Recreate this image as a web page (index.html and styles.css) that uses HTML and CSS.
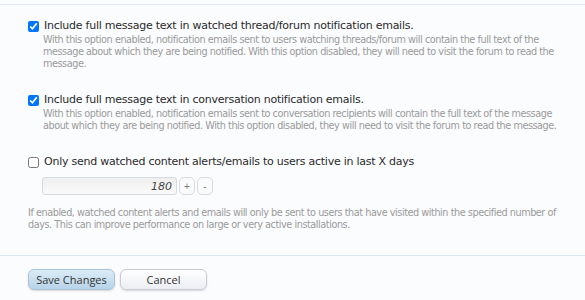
FILE: index.html
```html
<!DOCTYPE html>
<html lang="en">
<head>
  <meta charset="UTF-8">
  <title>options</title>
  <link rel="stylesheet" href="styles.css">
</head>
<body>
  <div class="top-rule"></div>

  <form class="options">
    <div class="option">
      <label class="check">
        <input type="checkbox" checked>
        <span>Include full message text in watched thread/forum notification emails.</span>
      </label>
      <p class="explain">With this option enabled, notification emails sent to users watching threads/forum will contain the full text of the message about which they are being notified. With this option disabled, they will need to visit the forum to read the message.</p>
    </div>

    <div class="option">
      <label class="check">
        <input type="checkbox" checked>
        <span>Include full message text in conversation notification emails.</span>
      </label>
      <p class="explain">With this option enabled, notification emails sent to conversation recipients will contain the full text of the message about which they are being notified. With this option disabled, they will need to visit the forum to read the message.</p>
    </div>

    <div class="option">
      <label class="check">
        <input type="checkbox">
        <span>Only send watched content alerts/emails to users active in last X days</span>
      </label>
      <div class="spin">
        <input type="text" class="spin-box" value="180">
        <button type="button" class="spin-btn">+</button>
        <button type="button" class="spin-btn">-</button>
      </div>
      <p class="explain wide">If enabled, watched content alerts and emails will only be sent to users that have visited within the specified number of days. This can improve performance on large or very active installations.</p>
    </div>

    <div class="submit-row">
      <button type="button" class="btn primary">Save Changes</button>
      <button type="button" class="btn">Cancel</button>
    </div>
  </form>
</body>
</html>
```

FILE: styles.css
```css
body {
  margin: 0;
  background-color: #fbfcfe;
  font-family: 'DejaVu Sans', sans-serif;
  color: #222;
}

.top-rule {
  height: 4px;
  border-bottom: 1px solid #e2e8f0;
}

.option {
  padding: 22px 0 0 28px;
}

.option:first-child {
  padding-top: 13px;
}

.check {
  display: flex;
  align-items: center;
  font-size: 11px;
  letter-spacing: -0.25px;
  line-height: 16px;
  color: #2a2a2a;
}

.check input {
  margin: 0 5px 0 0;
  width: 11px;
  height: 11px;
}

.explain {
  margin: 0 0 0 15px;
  font-size: 9.7px;
  letter-spacing: -0.45px;
  line-height: 12px;
  color: #9a9a9a;
  max-width: 522px;
}

.explain.wide {
  margin-left: 0;
  max-width: 540px;
}

.spin {
  display: flex;
  align-items: center;
  margin: 7px 0 12px 14px;
}

.spin-box {
  width: 125px;
  height: 16px;
  padding: 0 4px;
  border: 1px solid #d6dbe2;
  border-radius: 3px;
  background: linear-gradient(#efefef, #fafafa);
  text-align: right;
  font-family: 'DejaVu Sans', sans-serif;
  font-style: italic;
  font-size: 11px;
  color: #444;
}

.spin-btn {
  width: 16px;
  height: 18px;
  margin-left: 2px;
  padding: 0;
  border: 1px solid #d6dbe2;
  border-radius: 5px;
  background: #fbfbfb;
  font-size: 10px;
  color: #777;
}

.submit-row {
  margin-top: 24px;
  border-top: 1px solid #dce4ee;
  padding: 13px 28px;
  display: flex;
  gap: 5px;
}

.btn {
  width: 87px;
  height: 21px;
  border: 1px solid #c8ccd4;
  border-radius: 6px;
  background: linear-gradient(#ffffff, #eceef3);
  box-shadow: 0 1px 2px rgba(0,0,0,0.15);
  font-family: 'Open Sans', sans-serif;
  font-size: 11px;
  color: #333;
}

.btn.primary {
  border-color: #a9c3d8;
  background: linear-gradient(#dcecf7, #b7d3e8);
}
```
